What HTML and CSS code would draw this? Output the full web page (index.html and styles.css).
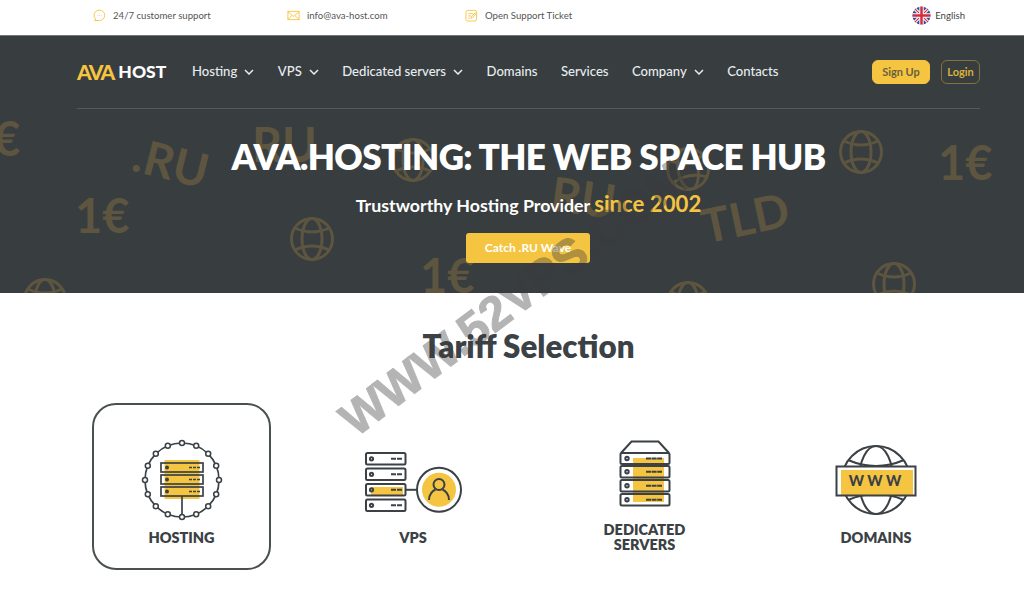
FILE: index.html
```html
<!DOCTYPE html>
<html lang="en">
<head>
  <meta charset="UTF-8" />
  <meta name="viewport" content="width=device-width, initial-scale=1" />
  <title>AVA.HOSTING</title>
  <link rel="stylesheet" href="styles.css">
</head>
<body>
  <svg class="defs" width="0" height="0" aria-hidden="true">
    <symbol id="globe" viewBox="0 0 44 44">
      <g fill="none" stroke="currentColor" stroke-width="3">
        <circle cx="22" cy="22" r="20.5"/>
        <ellipse cx="22" cy="22" rx="10" ry="20.5"/>
        <path d="M5 11Q22 19 39 11M5 33Q22 25 39 33"/>
      </g>
    </symbol>
    <symbol id="chev" viewBox="0 0 10 6">
      <path d="M1 1l4 4 4-4" fill="none" stroke="currentColor" stroke-width="1.5"/>
    </symbol>
  </svg>

  <div class="topbar">
    <a class="top-item item-support" href="#">
      <svg viewBox="0 0 14 14" class="top-icon"><path d="M7 1.2a5.6 5.6 0 0 1 0 11.2H1.8l1-1.6A5.6 5.6 0 0 1 7 1.2z"/><path d="M5 7h.6M6.8 7h.6M8.6 7h.6"/></svg>
      24/7 customer support
    </a>
    <a class="top-item item-mail" href="#">
      <svg viewBox="0 0 14 12" class="top-icon"><rect x="1" y="1.5" width="12" height="9"/><path d="M1 2l6 5 6-5M1 10.5l4.5-4.5M13 10.5L8.5 6"/></svg>
      info@ava-host.com
    </a>
    <a class="top-item item-ticket" href="#">
      <svg viewBox="0 0 14 14" class="top-icon"><rect x="1" y="1.5" width="11.5" height="11.5" rx="2"/><path d="M3.5 5h5M3.5 7.5h3M3.5 10h2M6.5 10l.5-1.8L11 4l1.2 1.2-4 4z"/></svg>
      Open Support Ticket
    </a>
    <a class="top-item item-lang" href="#">
      <svg viewBox="0 0 20 20" class="flag">
        <defs><clipPath id="round"><circle cx="10" cy="10" r="9.5"/></clipPath></defs>
        <g clip-path="url(#round)">
          <rect width="20" height="20" fill="#2d4f9e"/>
          <path d="M0 0l20 20M20 0L0 20" stroke="#fff" stroke-width="3.4"/>
          <path d="M0 0l20 20M20 0L0 20" stroke="#d8283c" stroke-width="1.2"/>
          <path d="M10 0v20M0 10h20" stroke="#fff" stroke-width="4.6"/>
          <path d="M10 0v20M0 10h20" stroke="#d8283c" stroke-width="2.6"/>
        </g>
      </svg>
      English
    </a>
  </div>

  <section class="hero">
    <!-- background pattern -->
    <span class="deco deco-euro-cut">€</span>
    <span class="deco deco-ru-left">.RU</span>
    <span class="deco deco-ru-top">RU</span>
    <span class="deco deco-one-left">1€</span>
    <span class="deco deco-one-mid">1€</span>
    <span class="deco deco-one-right">1€</span>
    <span class="deco deco-ru-mid">.RU</span>
    <span class="deco deco-tld">TLD</span>
    <svg class="globe globe-a"><use href="#globe"/></svg>
    <svg class="globe globe-b"><use href="#globe"/></svg>
    <svg class="globe globe-c"><use href="#globe"/></svg>
    <svg class="globe globe-d"><use href="#globe"/></svg>
    <svg class="globe globe-e"><use href="#globe"/></svg>
    <svg class="globe globe-f"><use href="#globe"/></svg>
    <svg class="globe globe-g"><use href="#globe"/></svg>

    <div class="hero-inner">
      <header class="navbar">
        <a class="logo" href="#"><span class="logo-ava">AVA</span><span class="logo-host">HOST</span></a>
        <nav class="menu">
          <a href="#">Hosting <svg class="chev"><use href="#chev"/></svg></a>
          <a href="#">VPS <svg class="chev"><use href="#chev"/></svg></a>
          <a href="#">Dedicated servers <svg class="chev"><use href="#chev"/></svg></a>
          <a href="#">Domains</a>
          <a href="#">Services</a>
          <a href="#">Company <svg class="chev"><use href="#chev"/></svg></a>
          <a href="#">Contacts</a>
        </nav>
        <div class="nav-btns">
          <a class="btn-sign" href="#">Sign Up</a>
          <a class="btn-login" href="#">Login</a>
        </div>
      </header>

      <h1>AVA.HOSTING: THE WEB SPACE HUB</h1>
      <p class="sub">Trustworthy Hosting Provider <span class="since">since 2002</span></p>
      <a class="btn-catch" href="#">Catch .RU Wave</a>
    </div>
  </section>

  <section class="tariffs">
    <h2>Tariff Selection</h2>
    <div class="tariff-grid">
      <a class="tariff active" href="#">
        <svg class="icon" width="84" height="84" viewBox="0 0 84 84">
          <rect x="24.500" y="22" width="35" height="39" fill="#f5c542"/>
          <g fill="none" stroke="#3b4145" stroke-width="1.7">
            <circle cx="42" cy="42" r="37"/>
            <path d="M42 58v21"/>
            <rect x="21" y="25" width="42" height="9"/>
            <rect x="21" y="37" width="42" height="9"/>
            <rect x="21" y="49" width="42" height="9"/>
            <path d="M49 29.500h11M49 41.500h11M49 53.500h11" stroke-dasharray="3 1"/>
          </g>
          <g fill="#3b4145"><circle cx="27" cy="29.500" r="2"/><circle cx="27" cy="41.500" r="2"/><circle cx="27" cy="53.500" r="2"/></g>
          <g fill="#fff" stroke="#3b4145" stroke-width="1.5">
            <circle cx="42" cy="5" r="2.500"/><circle cx="56.200" cy="7.800" r="2.500"/><circle cx="68.200" cy="15.800" r="2.500"/><circle cx="76.200" cy="27.800" r="2.500"/>
            <circle cx="79" cy="42" r="2.500"/><circle cx="76.200" cy="56.200" r="2.500"/><circle cx="68.200" cy="68.200" r="2.500"/><circle cx="56.200" cy="76.200" r="2.500"/>
            <circle cx="42" cy="79" r="2.500"/><circle cx="27.800" cy="76.200" r="2.500"/><circle cx="15.800" cy="68.200" r="2.500"/><circle cx="7.800" cy="56.200" r="2.500"/>
            <circle cx="5" cy="42" r="2.500"/><circle cx="7.800" cy="27.800" r="2.500"/><circle cx="15.800" cy="15.800" r="2.500"/><circle cx="27.800" cy="7.800" r="2.500"/>
          </g>
        </svg>
        <span class="tariff-name">HOSTING</span>
      </a>

      <a class="tariff" href="#">
        <svg class="icon" width="98" height="84" viewBox="0 -3 98 84">
          <rect x="7" y="46" width="32" height="9" fill="#f5c542"/>
          <g fill="none" stroke="#3b4145" stroke-width="2">
            <rect x="2" y="12" width="39.500" height="11.500" rx="1.500"/>
            <rect x="2" y="27.500" width="39.500" height="11.500" rx="1.500"/>
            <rect x="2" y="43" width="39.500" height="11.500" rx="1.500"/>
            <rect x="2" y="58.500" width="39.500" height="11.500" rx="1.500"/>
            <circle cx="7.500" cy="17.800" r="1.600"/><circle cx="7.500" cy="33.300" r="1.600"/><circle cx="7.500" cy="48.800" r="1.600"/><circle cx="7.500" cy="64.300" r="1.600"/>
            <path d="M27 17.800h11M27 33.300h11M27 48.800h11M27 64.300h11" stroke-dasharray="5 1"/>
            <path d="M41.500 48.800H53"/>
            <circle cx="75" cy="48.800" r="22"/>
          </g>
          <circle cx="75" cy="48.800" r="17" fill="#f5c542"/>
          <g fill="none" stroke="#3b4145" stroke-width="2">
            <circle cx="75" cy="43.500" r="5.500"/>
            <path d="M65 59c0-6 4-9.500 6.500-10.500M85 59c0-6-4-9.500-6.500-10.500"/>
          </g>
        </svg>
        <span class="tariff-name">VPS</span>
      </a>

      <a class="tariff" href="#">
        <svg class="icon" width="52" height="84" viewBox="0 0 52 84">
          <rect x="14" y="20" width="31" height="44" fill="#f5c542"/>
          <g fill="none" stroke="#3b4145" stroke-width="2">
            <path d="M2 15L12.500 3.500H39.500L50 15"/>
            <rect x="1.500" y="15" width="49" height="11" rx="1.500"/>
            <rect x="1.500" y="28" width="49" height="11.500" rx="1.500"/>
            <rect x="1.500" y="42" width="49" height="11.500" rx="1.500"/>
            <rect x="1.500" y="56" width="49" height="11.500" rx="1.500"/>
            <circle cx="8" cy="20.500" r="1.700"/><circle cx="8" cy="33.700" r="1.700"/><circle cx="8" cy="47.700" r="1.700"/><circle cx="8" cy="61.700" r="1.700"/>
            <path d="M27 20.500h16M27 33.700h16M27 47.700h16M27 61.700h16" stroke-dasharray="5 .6"/>
          </g>
        </svg>
        <span class="tariff-name">DEDICATED SERVERS</span>
      </a>

      <a class="tariff" href="#">
        <svg class="icon" width="84" height="84" viewBox="0 0 84 84">
          <g fill="none" stroke="#3b4145" stroke-width="2">
            <circle cx="42" cy="42" r="34"/>
            <ellipse cx="42" cy="42" rx="17" ry="34"/>
            <path d="M14 22Q42 34 70 22M14 62Q42 50 70 62"/>
          </g>
          <rect x="2" y="29" width="80" height="29" fill="#fff"/>
          <rect x="7" y="32" width="72" height="25" fill="#f5c542"/>
          <rect x="2.500" y="28.500" width="79" height="29" fill="none" stroke="#3b4145" stroke-width="2"/>
          <text x="41" y="48" text-anchor="middle" class="www">W W W</text>
        </svg>
        <span class="tariff-name">DOMAINS</span>
      </a>
    </div>
  </section>

  <div class="watermark">WWW.52VPS.COM</div>
</body>
</html>
```

FILE: styles.css
```css
:root {
  --dark: #383d40;
  --yellow: #f5c542;
  --deco: #5d553f;
  --text: #3b4145;
}

* {
  box-sizing: border-box;
}

body {
  margin: 0;
  font-family: Lato, 'Open Sans', sans-serif;
  background: #fff;
  color: var(--text);
  overflow-x: hidden;
}

a {
  text-decoration: none;
  color: inherit;
}

.defs {
  position: absolute;
}

/* ----- top strip ----- */
.topbar {
  display: flex;
  align-items: center;
  height: 36px;
  padding: 0 0 4px 93px;
  border-bottom: 1px solid #777;
}

.top-item {
  display: flex;
  align-items: center;
  gap: 7px;
  font-size: 9.600px;
  color: #555;
}

.item-support {
  width: 194px;
}

.item-mail {
  width: 178px;
}

.item-lang {
  margin-left: auto;
  margin-right: 59px;
  gap: 4px;
  color: #444;
}

.top-icon {
  width: 13px;
  height: 13px;
  fill: none;
  stroke: var(--yellow);
  stroke-width: 1;
}

.flag {
  width: 19px;
  height: 19px;
}

/* ----- hero ----- */
.hero {
  position: relative;
  height: 257px;
  background: var(--dark);
  overflow: hidden;
}

.hero-inner {
  position: relative;
  width: 903px;
  margin-left: 77px;
  text-align: center;
}

.navbar {
  display: flex;
  align-items: center;
  height: 73px;
  border-bottom: 1px solid #56595c;
  text-align: left;
}

.logo {
  display: flex;
  align-items: center;
  width: 89px;
  margin-top: -1px;
  font-weight: 900;
  font-size: 17.500px;
  line-height: 1;
}

.logo-ava {
  color: var(--yellow);
  font-size: 21px;
  letter-spacing: -1.800px;
  margin-right: 5px;
}

.logo-host {
  color: #fff;
}

.menu {
  display: flex;
  gap: 23.500px;
  margin-left: 26px;
  margin-top: -3px;
  font-size: 13.100px;
  font-weight: 500;
  color: #e6ecef;
}

.menu a {
  display: flex;
  align-items: center;
  gap: 7px;
}

.chev {
  width: 10px;
  height: 6px;
  margin-top: 2px;
}

.nav-btns {
  display: flex;
  gap: 11px;
  margin-left: auto;
  font-size: 11px;
  font-weight: 700;
}

.btn-sign,
.btn-login {
  height: 24px;
  line-height: 22px;
  text-align: center;
  border-radius: 6px;
}

.btn-sign {
  width: 58px;
  background: var(--yellow);
  color: #6a5f3a;
  border: 1px solid var(--yellow);
}

.btn-login {
  width: 39px;
  color: #d9b13e;
  border: 1px solid #85733a;
}

h1 {
  margin: 25px 0 0;
  font-size: 35px;
  line-height: 44px;
  font-weight: 800;
  letter-spacing: -0.600px;
  color: #fff;
}

.sub {
  margin: 12px 0 0;
  font-size: 17.800px;
  line-height: 28px;
  font-weight: 700;
  color: #fff;
}

.since {
  font-size: 22.200px;
  color: var(--yellow);
}

.btn-catch {
  display: block;
  width: 124px;
  height: 30px;
  margin: 14px 0 0 389px;
  line-height: 30px;
  font-size: 12px;
  font-weight: 700;
  color: #fff;
  background: var(--yellow);
  border-radius: 3px;
}

/* hero pattern */
.deco {
  position: absolute;
  font-size: 47px;
  line-height: 47px;
  font-weight: 700;
  color: var(--deco);
}

.deco-euro-cut { left: -7px; top: 79px; }
.deco-ru-left { left: 133px; top: 103px; transform: rotate(14deg); }
.deco-ru-top { left: 252px; top: 85px; }
.deco-one-left { left: 75px; top: 156px; }
.deco-one-mid { left: 420px; top: 216px; }
.deco-one-right { left: 938px; top: 103px; }
.deco-ru-mid { left: 540px; top: 137px; transform: rotate(8deg); }
.deco-tld { left: 701px; top: 158px; transform: rotate(-12deg); }

.globe {
  position: absolute;
  width: 44px;
  height: 44px;
  color: var(--deco);
}

.globe-a { left: 391px; top: 102px; }
.globe-b { left: 290px; top: 181px; }
.globe-c { left: 23px; top: 242px; }
.globe-d { left: 839px; top: 94px; }
.globe-e { left: 666px; top: 111px; transform: rotate(-10deg); }
.globe-f { left: 872px; top: 226px; }
.globe-g { left: 666px; top: 245px; }

/* ----- tariffs ----- */
.tariffs {
  width: 903px;
  margin-left: 77px;
  padding: 33px 0 24px;
}

h2 {
  margin: 0 0 37px;
  font-size: 31.300px;
  line-height: 40px;
  font-weight: 800;
  text-align: center;
  color: var(--text);
}

.tariff-grid {
  display: grid;
  grid-template-columns: repeat(4, 179px);
  gap: 52.500px;
  padding-left: 15px;
}

.tariff {
  display: flex;
  flex-direction: column;
  align-items: center;
  height: 167px;
  padding-top: 33px;
  border: 2px solid transparent;
  border-radius: 24px;
  text-align: center;
}

.tariff.active {
  border-color: #4a4f52;
}

.icon {
  flex: none;
}

.tariff-name {
  display: flex;
  align-items: center;
  justify-content: center;
  width: 120px;
  height: 30px;
  font-size: 14.500px;
  line-height: 15px;
  font-weight: 800;
  color: var(--text);
}

.www {
  font-family: Lato, sans-serif;
  font-size: 14.500px;
  font-weight: 900;
  fill: var(--text);
}

/* overlay stamp */
.watermark {
  position: absolute;
  left: 514px;
  top: 298px;
  transform: translate(-50%, -50%) rotate(-37deg);
  font-family: 'Liberation Sans', sans-serif;
  font-size: 48px;
  font-weight: 700;
  white-space: nowrap;
  color: #3c3c3c;
  -webkit-text-stroke: 1px #3c3c3c;
  opacity: 0.38;
  pointer-events: none;
}
```
